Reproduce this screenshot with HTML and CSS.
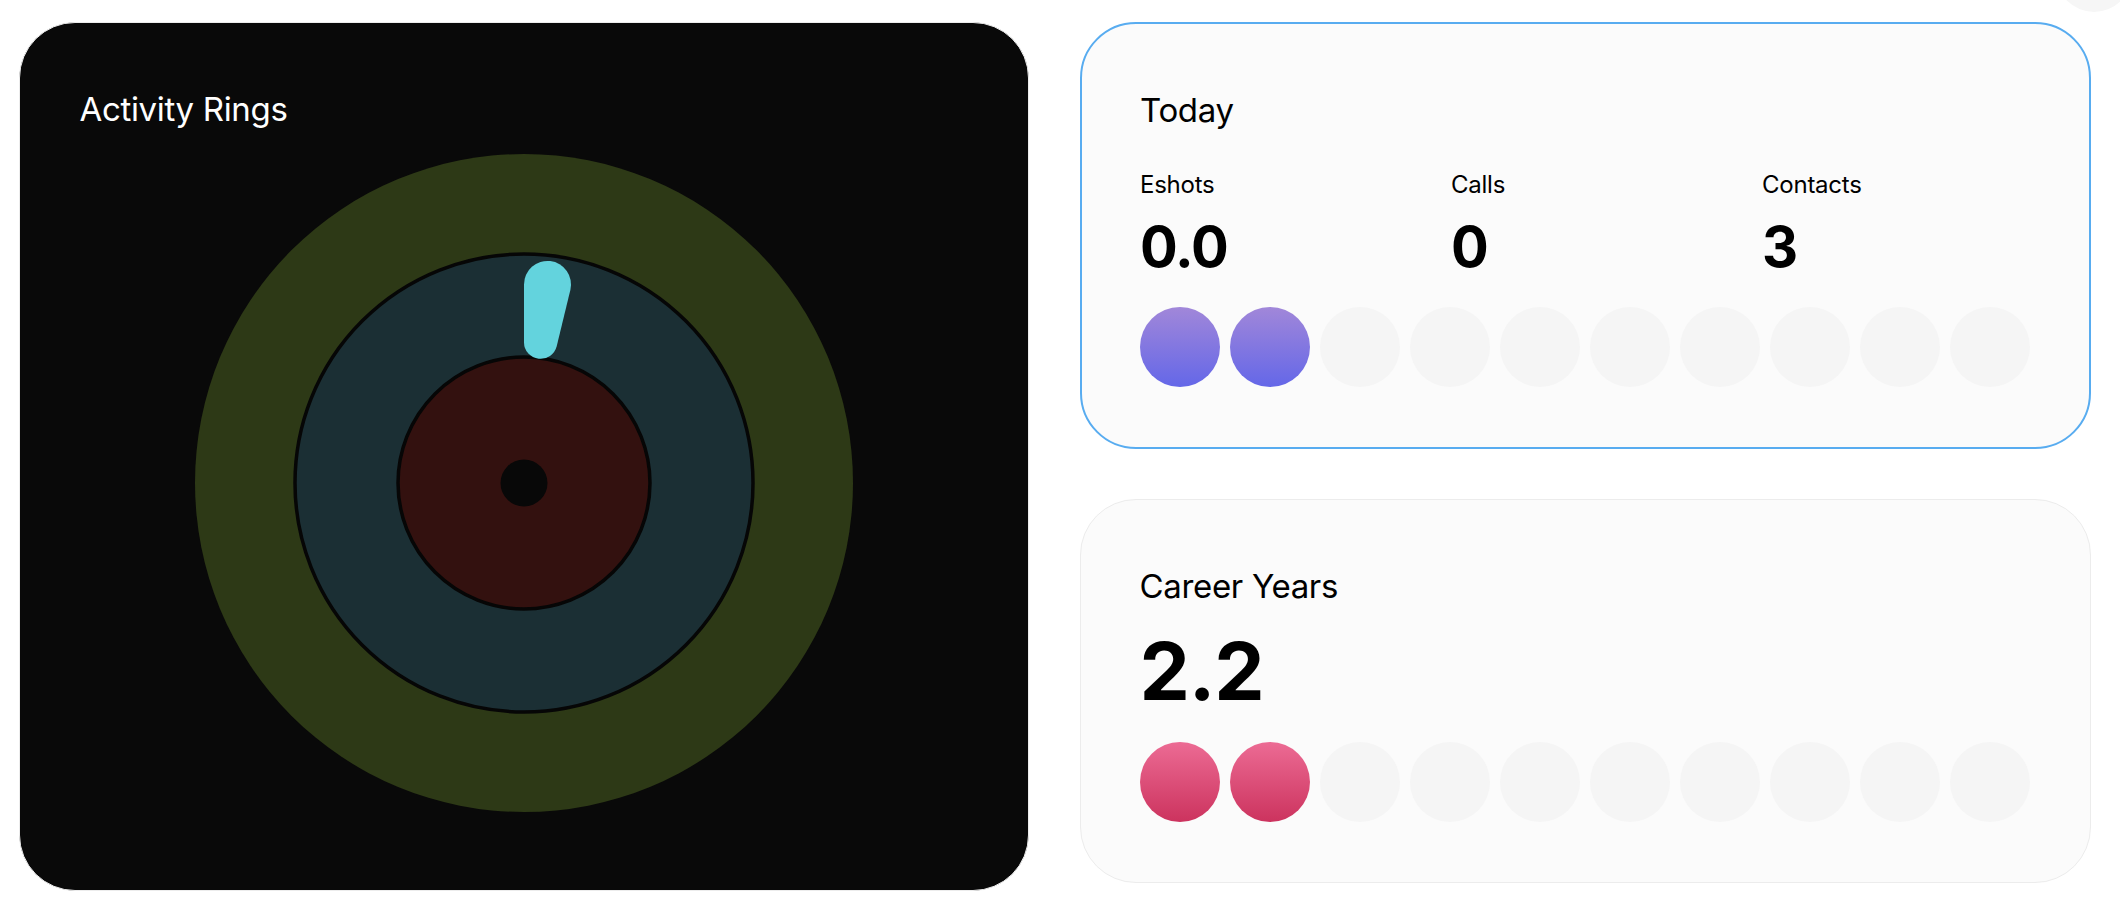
FILE: index.html
```html
<!DOCTYPE html>
<html lang="en">
<head>
<meta charset="utf-8">
<title>Activity</title>
<link rel="stylesheet" href="styles.css">
</head>
<body>
<div class="corner-blob"></div>
<main class="layout">
  <section class="card card-dark">
    <h2 class="card-title title-light">Activity Rings</h2>
    <svg class="rings" width="660" height="660" viewBox="0 0 660 660">
      <circle cx="330" cy="330" r="329" fill="#2d3916"/>
      <circle cx="330" cy="330" r="229" fill="#1b2f34" stroke="#060606" stroke-width="3.5"/>
      <circle cx="330" cy="330" r="126" fill="#33110f" stroke="#060606" stroke-width="3.5"/>
      <circle cx="330" cy="330" r="23.5" fill="#080808"/>
      <path d="M330,189.4 L330,131.4 A23.5,23.5 0 1 1 376.35,136.9 L362.7,193.3 A16.6,16.6 0 0 1 330,189.4 Z" fill="#63d3dd"/>
    </svg>
  </section>

  <div class="column">
    <section class="card card-light card-active">
      <h2 class="card-title">Today</h2>
      <div class="stats">
        <div class="stat">
          <div class="stat-label">Eshots</div>
          <div class="stat-value">0.0</div>
        </div>
        <div class="stat">
          <div class="stat-label">Calls</div>
          <div class="stat-value">0</div>
        </div>
        <div class="stat">
          <div class="stat-label">Contacts</div>
          <div class="stat-value">3</div>
        </div>
      </div>
      <div class="dots">
        <span class="dot dot-purple"></span>
        <span class="dot dot-purple"></span>
        <span class="dot"></span>
        <span class="dot"></span>
        <span class="dot"></span>
        <span class="dot"></span>
        <span class="dot"></span>
        <span class="dot"></span>
        <span class="dot"></span>
        <span class="dot"></span>
      </div>
    </section>

    <section class="card card-light">
      <h2 class="card-title">Career Years</h2>
      <div class="big-value">2.2</div>
      <div class="dots dots-career">
        <span class="dot dot-pink"></span>
        <span class="dot dot-pink"></span>
        <span class="dot"></span>
        <span class="dot"></span>
        <span class="dot"></span>
        <span class="dot"></span>
        <span class="dot"></span>
        <span class="dot"></span>
        <span class="dot"></span>
        <span class="dot"></span>
      </div>
    </section>
  </div>
</main>
</body>
</html>
```

FILE: styles.css
```css
* {
  box-sizing: border-box;
}

html, body {
  margin: 0;
  padding: 0;
  background: #ffffff;
}

body {
  font-family: "Inter", "Liberation Sans", sans-serif;
  color: #000000;
  width: 2120px;
  height: 918px;
  overflow: hidden;
  position: relative;
}

.corner-blob {
  position: absolute;
  right: -12px;
  top: -64px;
  width: 76px;
  height: 76px;
  border-radius: 50%;
  background: #f6f6f6;
}

.layout {
  display: grid;
  grid-template-columns: 1010px 1011px;
  column-gap: 51px;
  padding: 22px 29px 0 19px;
  align-items: start;
}

.card {
  border-radius: 56px;
}

.card-dark {
  background: #090909;
  border: 1.5px solid #ececec;
  height: 869px;
  padding: 67px 60px 0 59.5px;
}

.card-title {
  margin: 0;
  font-size: 33px;
  line-height: 38px;
  font-weight: 400;
  letter-spacing: -0.01em;
}

.title-light {
  color: #ffffff;
}

.rings {
  display: block;
  margin: 24.5px auto 0;
}

.column {
  display: flex;
  flex-direction: column;
  gap: 50px;
}

.card-light {
  background: #fbfbfb;
  border: 1.5px solid #ececec;
  padding: 67px 60px 59.5px 58.5px;
}

.card-active {
  border: 2px solid #58acf0;
  padding-left: 58px;
}

.stats {
  display: grid;
  grid-template-columns: repeat(3, 1fr);
  column-gap: 44px;
  margin-top: 42px;
}

.stat-label {
  font-size: 24px;
  line-height: 28px;
  font-weight: 400;
  letter-spacing: -0.01em;
}

.stat-value {
  margin-top: 15px;
  font-size: 56px;
  line-height: 66px;
  font-weight: 700;
  letter-spacing: -0.02em;
}

.big-value {
  margin-top: 18.5px;
  font-size: 80px;
  line-height: 96px;
  font-weight: 700;
  letter-spacing: -0.015em;
}

.dots {
  display: flex;
  gap: 10px;
  margin-top: 27px;
}

.dots-career {
  margin-top: 23px;
}

.dot {
  width: 80px;
  height: 80px;
  flex: 0 0 80px;
  border-radius: 50%;
  background: #f5f5f5;
}

.dot-purple {
  background: linear-gradient(180deg, #a187d9 0%, #6467e8 100%);
}

.dot-pink {
  background: linear-gradient(180deg, #ec6b94 0%, #cc335e 100%);
}
```
